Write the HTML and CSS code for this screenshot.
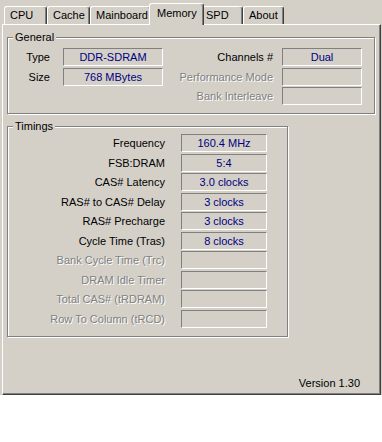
FILE: index.html
```html
<!DOCTYPE html>
<html lang="en">
<head>
    <meta charset="UTF-8">
    <meta name="viewport" content="width=device-width, initial-scale=1.0">
    <title>CPU-Z Memory</title>
    <link rel="stylesheet" href="styles.css">
</head>
<body>
    <div class="window">
        <!-- Pestañas -->
        <div class="tabs">
            <div class="tab tab-cpu">CPU</div>
            <div class="tab tab-cache">Cache</div>
            <div class="tab tab-mainboard">Mainboard</div>
            <div class="tab tab-active">Memory</div>
            <div class="tab tab-spd">SPD</div>
            <div class="tab tab-about">About</div>
        </div>

        <div class="panel">
            <!-- General -->
            <fieldset class="group group-general">
                <legend>General</legend>
                <div class="general-grid">
                    <span class="label label-left">Type</span>
                    <div class="field">DDR-SDRAM</div>
                    <span class="label label-right">Channels #</span>
                    <div class="field">Dual</div>

                    <span class="label label-left">Size</span>
                    <div class="field">768 MBytes</div>
                    <span class="label label-right off">Performance Mode</span>
                    <div class="field"></div>

                    <span></span>
                    <span></span>
                    <span class="label label-right off">Bank Interleave</span>
                    <div class="field"></div>
                </div>
            </fieldset>

            <!-- Timings -->
            <fieldset class="group group-timings">
                <legend>Timings</legend>
                <div class="timings-grid">
                    <span class="label">Frequency</span>
                    <div class="field">160.4 MHz</div>
                    <span class="label">FSB:DRAM</span>
                    <div class="field">5:4</div>
                    <span class="label">CAS# Latency</span>
                    <div class="field">3.0 clocks</div>
                    <span class="label">RAS# to CAS# Delay</span>
                    <div class="field">3 clocks</div>
                    <span class="label">RAS# Precharge</span>
                    <div class="field">3 clocks</div>
                    <span class="label">Cycle Time (Tras)</span>
                    <div class="field">8 clocks</div>
                    <span class="label off">Bank Cycle Time (Trc)</span>
                    <div class="field"></div>
                    <span class="label off">DRAM Idle Timer</span>
                    <div class="field"></div>
                    <span class="label off">Total CAS# (tRDRAM)</span>
                    <div class="field"></div>
                    <span class="label off">Row To Column (tRCD)</span>
                    <div class="field"></div>
                </div>
            </fieldset>

            <div class="version">Version 1.30</div>
        </div>
    </div>
</body>
</html>
```

FILE: styles.css
```css
body {
    margin: 0;
    background-color: #ffffff;
    font-family: "Liberation Sans", Arial, sans-serif;
    font-size: 11px;
    color: #000000;
}

.window {
    width: 382px;
    height: 395px;
    box-sizing: border-box;
    padding: 2px 0 0 2px;
    background-color: #d4d0c8;
}

/* Pestañas */
.tabs {
    display: flex;
    align-items: flex-end;
    height: 22px;
    padding-left: 2px;
}

.tab {
    height: 18px;
    box-sizing: border-box;
    padding-left: 5px;
    line-height: 17px;
    border-top: 1px solid #ffffff;
    border-left: 1px solid #ffffff;
    border-right: 1px solid #404040;
    border-radius: 3px 3px 0 0;
    box-shadow: inset -1px 0 0 #808080;
    background-color: #d4d0c8;
    white-space: nowrap;
}

.tab-cpu { width: 43px; }
.tab-cache { width: 43px; }
.tab-mainboard { width: 61px; }
.tab-spd { width: 41px; padding-left: 3px; }
.tab-about { width: 41px; }

.tab-active {
    position: relative;
    width: 55px;
    height: 22px;
    margin: 0 -2px -1px -2px;
    padding-left: 7px;
    padding-top: 2px;
    line-height: 14px;
}

/* Panel */
.panel {
    display: flex;
    flex-direction: column;
    width: 379px;
    height: 371px;
    box-sizing: border-box;
    border-top: 1px solid #ffffff;
    border-left: 1px solid #ffffff;
    border-right: 1px solid #404040;
    border-bottom: 1px solid #404040;
    box-shadow: inset -1px -1px 0 #808080;
}

.group {
    margin: 6px 0 0 4px;
    padding: 4px 0 8px 0;
    border: 1px solid #808080;
    box-shadow: inset 1px 1px 0 #ffffff, 1px 1px 0 #ffffff;
    min-width: 0;
    box-sizing: border-box;
}

.group legend {
    margin-left: 5px;
    padding: 0 2px;
    line-height: 13px;
    background-color: #d4d0c8;
}

.group-general {
    width: 368px;
}

.group-timings {
    width: 281px;
    padding-top: 1px;
}

.general-grid {
    display: grid;
    grid-template-columns: 55px 100px 119px 80px;
    grid-auto-rows: 18px;
    row-gap: 1.5px;
}

.timings-grid {
    display: grid;
    grid-template-columns: 173px 86px;
    grid-auto-rows: 18px;
    row-gap: 1.5px;
}

.label {
    line-height: 18px;
    text-align: right;
    padding-right: 16px;
    white-space: nowrap;
}

.general-grid .label-left {
    padding-right: 13px;
}

.general-grid .label-right {
    padding-right: 9px;
}

.label.off {
    color: #808080;
    text-shadow: 1px 1px 0 #ffffff;
}

.field {
    box-sizing: border-box;
    height: 18px;
    line-height: 16px;
    text-align: center;
    color: #000080;
    border-top: 1px solid #808080;
    border-left: 1px solid #808080;
    border-right: 1px solid #ffffff;
    border-bottom: 1px solid #ffffff;
}

.version {
    margin-top: auto;
    padding: 0 20px 4px 0;
    line-height: 13px;
    text-align: right;
}
```
